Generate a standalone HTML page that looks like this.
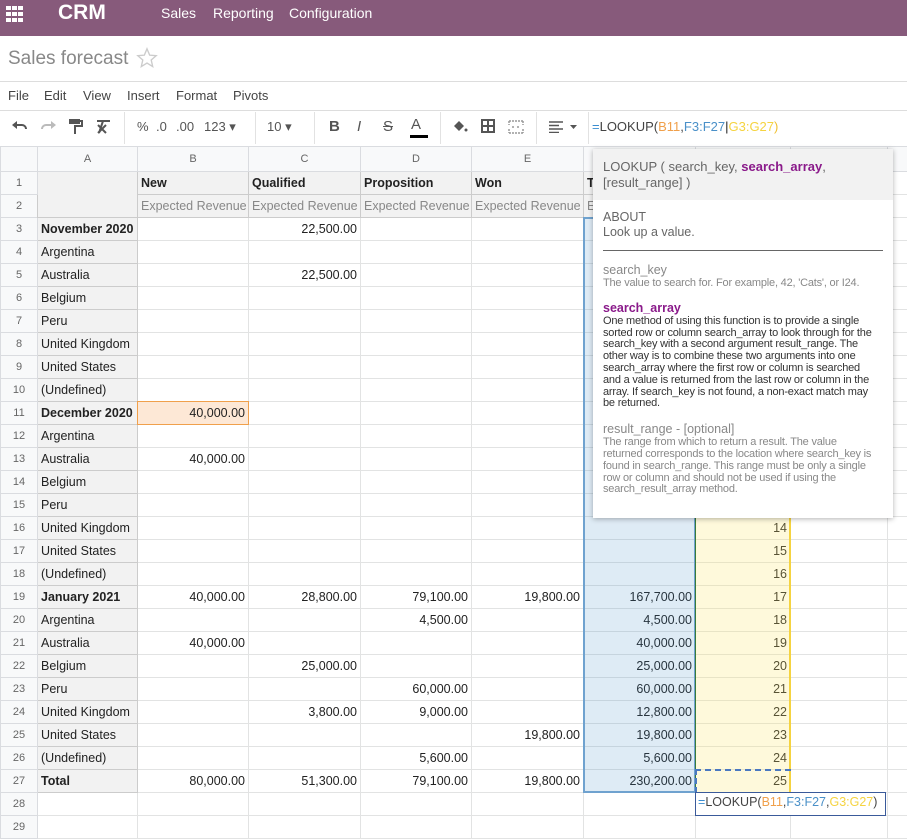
<!DOCTYPE html>
<html><head><meta charset="utf-8">
<style>
*{margin:0;padding:0;box-sizing:border-box}
body{width:907px;height:823px;overflow:hidden;background:#fff;font-family:"Liberation Sans",Arial,sans-serif;font-size:13px;color:#222;position:relative}
.top{position:absolute;left:0;top:0;width:907px;height:36px;background:#875a7b;color:#fff}
.top .logo{position:absolute;left:58px;top:1px;font-size:21px;font-weight:bold}
.top .m{position:absolute;top:5px;font-size:14px}
.title{position:absolute;left:8px;top:48px;font-size:19px;color:#888}
.line{position:absolute;left:0;width:907px;height:1px;background:#ddd}
.menu{position:absolute;top:88px;font-size:13px;color:#444}
.tb{position:absolute;top:119px;font-size:13px;color:#555}
.sep{position:absolute;top:112px;width:1px;height:32px;background:#e2e2e2}
table{position:absolute;left:0;top:146px;border-collapse:collapse;table-layout:fixed;width:907px}
td{height:23px;border:1px solid #e2e3e3;padding:0 3px;white-space:nowrap;overflow:hidden;font-size:12.5px;line-height:21px}
tr.ch td{height:25px;background:#f8f9fa;color:#666;text-align:center;font-size:11px;border-color:#dadce0}
td.r{background:#f8f9fa;color:#666;text-align:center;font-size:11px;border-color:#dadce0}
td.h{background:#f2f2f2;border-color:#ccc}
td.b{font-weight:bold}
td.n{text-align:right}
td.g{color:#888}
.ov{position:absolute}
.pop{position:absolute;left:593px;top:149px;width:300px;height:369px;background:#fff;box-shadow:0 1px 5px rgba(0,0,0,.3);color:#666}
.d{padding:1px 16px 0 10px;font-size:11px;line-height:11.8px;letter-spacing:-0.2px}
</style></head><body>
<div class="top">
<svg style="position:absolute;left:6px;top:6px" width="18" height="16" viewBox="0 0 18 16" fill="#fff"><rect x="0" y="0" width="5" height="4"/><rect x="6" y="0" width="5" height="4"/><rect x="12" y="0" width="5" height="4"/><rect x="0" y="6" width="5" height="4"/><rect x="6" y="6" width="5" height="4"/><rect x="12" y="6" width="5" height="4"/><rect x="0" y="12" width="5" height="4"/><rect x="6" y="12" width="5" height="4"/><rect x="12" y="12" width="5" height="4"/></svg>
<div class="logo">CRM</div>
<div class="m" style="left:161px">Sales</div>
<div class="m" style="left:213px">Reporting</div>
<div class="m" style="left:289px">Configuration</div>
</div>
<div class="title">Sales forecast</div>
<svg style="position:absolute;left:136px;top:47px" width="22" height="22" viewBox="0 0 24 24"><path d="M12 2l2.9 6.9 7.1.6-5.4 4.7 1.6 7.1L12 17.5 5.8 21.3l1.6-7.1L2 9.5l7.1-.6z" fill="none" stroke="#ccc" stroke-width="1.5"/></svg>
<div class="line" style="top:81px"></div>
<div class="menu" style="left:8px">File</div>
<div class="menu" style="left:44px">Edit</div>
<div class="menu" style="left:83px">View</div>
<div class="menu" style="left:127px">Insert</div>
<div class="menu" style="left:176px">Format</div>
<div class="menu" style="left:233px">Pivots</div>
<div class="line" style="top:110px"></div>
<svg style="position:absolute;left:11px;top:120px" width="18" height="14" viewBox="0 0 18 14"><path d="M3 5h8a4 4 0 0 1 4 4" fill="none" stroke="#555" stroke-width="2"/><path d="M1 5l5-4v8z" fill="#555"/></svg>
<svg style="position:absolute;left:39px;top:120px" width="18" height="14" viewBox="0 0 18 14"><path d="M15 5H7a4 4 0 0 0-4 4" fill="none" stroke="#bbb" stroke-width="2"/><path d="M17 5l-5-4v8z" fill="#bbb"/></svg>
<svg style="position:absolute;left:69px;top:119px" width="14" height="16" viewBox="0 0 14 16"><rect x="0" y="0" width="11" height="5" fill="#555"/><path d="M11 2h2v5H6v8" fill="none" stroke="#555" stroke-width="2"/></svg>
<svg style="position:absolute;left:96px;top:120px" width="16" height="14" viewBox="0 0 16 14"><path d="M1 1h13M7 1l-4 12M2 5l8 8M10 5l-8 8" fill="none" stroke="#555" stroke-width="2"/></svg>
<div class="sep" style="left:124px"></div>
<div class="tb" style="left:137px">%</div>
<div class="tb" style="left:156px">.0</div>
<div class="tb" style="left:176px">.00</div>
<div class="tb" style="left:204px">123 ▾</div>
<div class="sep" style="left:255px"></div>
<div class="tb" style="left:267px">10 ▾</div>
<div class="sep" style="left:314px"></div>
<div class="tb" style="left:329px;font-weight:bold;font-size:15px;top:118px">B</div>
<div class="tb" style="left:357px;font-style:italic;font-size:15px;top:118px">I</div>
<div class="tb" style="left:383px;font-size:15px;top:118px;text-decoration:line-through">S</div>
<div class="tb" style="left:411px;font-size:15px;top:116px">A</div>
<div class="ov" style="left:410px;top:135px;width:18px;height:3px;background:#000"></div>
<div class="sep" style="left:440px"></div>
<svg style="position:absolute;left:452px;top:119px" width="16" height="14" viewBox="0 0 16 14"><path d="M2 7l5-5 5 5-5 5z" fill="#555"/><circle cx="14" cy="11" r="1.5" fill="#555"/></svg>
<svg style="position:absolute;left:481px;top:119px" width="14" height="14" viewBox="0 0 14 14"><path d="M1 1h12v12H1zM7 1v12M1 7h12" fill="none" stroke="#555" stroke-width="2"/></svg>
<svg style="position:absolute;left:508px;top:120px" width="16" height="14" viewBox="0 0 16 14"><path d="M1 1h14M1 13h14M1 1v4M15 1v4M1 9v4M15 9v4M4 7h3M9 7h3" fill="none" stroke="#999" stroke-width="1.5" stroke-dasharray="2 1"/></svg>
<div class="sep" style="left:536px"></div>
<svg style="position:absolute;left:549px;top:121px" width="28" height="12" viewBox="0 0 28 12"><path d="M0 1h14M0 4.5h10M0 8h14M0 11.5h10" stroke="#555" stroke-width="1.6"/><path d="M21 4h7l-3.5 4z" fill="#555"/></svg>
<div class="sep" style="left:588px"></div>
<div class="tb" style="left:592px;color:#444"><span style="color:#3a8dd0">=</span>LOOKUP(<span style="color:#f0a04b">B11</span>,<span style="color:#4a90c8">F3:F27</span><span style="color:#222">|</span><span style="color:#f5d340">G3:G27</span><span style="color:#f0c030">)</span></div>

<table>
<colgroup><col style="width:37px"><col style="width:100px"><col style="width:111px"><col style="width:112px"><col style="width:111px"><col style="width:112px"><col style="width:112px"><col style="width:95px"><col style="width:97px"><col style="width:20px"></colgroup>
<tr class="ch"><td></td><td>A</td><td>B</td><td>C</td><td>D</td><td>E</td><td>F</td><td>G</td><td>H</td><td></td></tr>
<tr><td class="r">1</td><td class="h" rowspan="2"></td><td class="h b">New</td><td class="h b">Qualified</td><td class="h b">Proposition</td><td class="h b">Won</td><td class="h b">Total</td><td></td><td></td><td></td></tr>
<tr><td class="r">2</td><td class="h g">Expected Revenue</td><td class="h g">Expected Revenue</td><td class="h g">Expected Revenue</td><td class="h g">Expected Revenue</td><td class="h g">Expected Revenue</td><td></td><td></td><td></td></tr>
<tr><td class="r">3</td><td class="h b">November 2020</td><td></td><td class="n">22,500.00</td><td></td><td></td><td></td><td class="n">1</td><td></td><td></td></tr>
<tr><td class="r">4</td><td class="h">Argentina</td><td></td><td></td><td></td><td></td><td></td><td class="n">2</td><td></td><td></td></tr>
<tr><td class="r">5</td><td class="h">Australia</td><td></td><td class="n">22,500.00</td><td></td><td></td><td></td><td class="n">3</td><td></td><td></td></tr>
<tr><td class="r">6</td><td class="h">Belgium</td><td></td><td></td><td></td><td></td><td></td><td class="n">4</td><td></td><td></td></tr>
<tr><td class="r">7</td><td class="h">Peru</td><td></td><td></td><td></td><td></td><td></td><td class="n">5</td><td></td><td></td></tr>
<tr><td class="r">8</td><td class="h">United Kingdom</td><td></td><td></td><td></td><td></td><td></td><td class="n">6</td><td></td><td></td></tr>
<tr><td class="r">9</td><td class="h">United States</td><td></td><td></td><td></td><td></td><td></td><td class="n">7</td><td></td><td></td></tr>
<tr><td class="r">10</td><td class="h">(Undefined)</td><td></td><td></td><td></td><td></td><td></td><td class="n">8</td><td></td><td></td></tr>
<tr><td class="r">11</td><td class="h b">December 2020</td><td class="n" style="background:#fde8d6">40,000.00</td><td></td><td></td><td></td><td></td><td class="n">9</td><td></td><td></td></tr>
<tr><td class="r">12</td><td class="h">Argentina</td><td></td><td></td><td></td><td></td><td></td><td class="n">10</td><td></td><td></td></tr>
<tr><td class="r">13</td><td class="h">Australia</td><td class="n">40,000.00</td><td></td><td></td><td></td><td></td><td class="n">11</td><td></td><td></td></tr>
<tr><td class="r">14</td><td class="h">Belgium</td><td></td><td></td><td></td><td></td><td></td><td class="n">12</td><td></td><td></td></tr>
<tr><td class="r">15</td><td class="h">Peru</td><td></td><td></td><td></td><td></td><td></td><td class="n">13</td><td></td><td></td></tr>
<tr><td class="r">16</td><td class="h">United Kingdom</td><td></td><td></td><td></td><td></td><td></td><td class="n">14</td><td></td><td></td></tr>
<tr><td class="r">17</td><td class="h">United States</td><td></td><td></td><td></td><td></td><td></td><td class="n">15</td><td></td><td></td></tr>
<tr><td class="r">18</td><td class="h">(Undefined)</td><td></td><td></td><td></td><td></td><td></td><td class="n">16</td><td></td><td></td></tr>
<tr><td class="r">19</td><td class="h b">January 2021</td><td class="n">40,000.00</td><td class="n">28,800.00</td><td class="n">79,100.00</td><td class="n">19,800.00</td><td class="n">167,700.00</td><td class="n">17</td><td></td><td></td></tr>
<tr><td class="r">20</td><td class="h">Argentina</td><td></td><td></td><td class="n">4,500.00</td><td></td><td class="n">4,500.00</td><td class="n">18</td><td></td><td></td></tr>
<tr><td class="r">21</td><td class="h">Australia</td><td class="n">40,000.00</td><td></td><td></td><td></td><td class="n">40,000.00</td><td class="n">19</td><td></td><td></td></tr>
<tr><td class="r">22</td><td class="h">Belgium</td><td></td><td class="n">25,000.00</td><td></td><td></td><td class="n">25,000.00</td><td class="n">20</td><td></td><td></td></tr>
<tr><td class="r">23</td><td class="h">Peru</td><td></td><td></td><td class="n">60,000.00</td><td></td><td class="n">60,000.00</td><td class="n">21</td><td></td><td></td></tr>
<tr><td class="r">24</td><td class="h">United Kingdom</td><td></td><td class="n">3,800.00</td><td class="n">9,000.00</td><td></td><td class="n">12,800.00</td><td class="n">22</td><td></td><td></td></tr>
<tr><td class="r">25</td><td class="h">United States</td><td></td><td></td><td></td><td class="n">19,800.00</td><td class="n">19,800.00</td><td class="n">23</td><td></td><td></td></tr>
<tr><td class="r">26</td><td class="h">(Undefined)</td><td></td><td></td><td class="n">5,600.00</td><td></td><td class="n">5,600.00</td><td class="n">24</td><td></td><td></td></tr>
<tr><td class="r">27</td><td class="h b">Total</td><td class="n">80,000.00</td><td class="n">51,300.00</td><td class="n">79,100.00</td><td class="n">19,800.00</td><td class="n">230,200.00</td><td class="n">25</td><td></td><td></td></tr>
<tr><td class="r">28</td><td></td><td></td><td></td><td></td><td></td><td></td><td></td><td></td><td></td></tr>
<tr><td class="r">29</td><td></td><td></td><td></td><td></td><td></td><td></td><td></td><td></td><td></td></tr>
</table>
<div class="ov" style="left:137px;top:401px;width:112px;height:24px;border:1px solid #f0a04b;"></div>
<div class="ov" style="left:583px;top:217px;width:113px;height:576px;background:rgba(74,144,200,.18);border:2px solid #6fa2cf;"></div>
<div class="ov" style="left:695px;top:217px;width:96px;height:576px;background:rgba(250,230,110,.25);border-right:2px solid #f5d340;border-left:1px solid #3a7a3a;"></div>
<div class="ov" style="left:695px;top:769px;width:96px;height:24px;border:2px dashed #4a78c0;border-right:none;border-bottom:none"></div>
<div class="ov" style="left:695px;top:792px;width:191px;height:24px;background:#fff;border:1px solid #3a5a9a;padding:2px 2px;font-size:12.5px;color:#444"><span style="color:#3a8dd0">=</span>LOOKUP(<span style="color:#f0a04b">B11</span>,<span style="color:#4a90c8">F3:F27</span>,<span style="color:#f5d340">G3:G27</span>)</div>

<div class="pop">
<div style="background:#f2f2f2;padding:10px 10px 10px 10px;font-size:13px;line-height:16px;height:51px">LOOKUP ( search_key, <span style="color:#8a1a8a;font-weight:bold">search_array</span>,<br>[result_range] )</div>
<div style="padding:10px 10px 0 10px;font-size:12.5px;line-height:15px">ABOUT<br>Look up a value.</div>
<div style="margin:10px 10px 0 10px;height:1px;background:#666"></div>
<div style="padding:12px 10px 0 10px;font-size:12.5px;line-height:14px;color:#888">search_key</div>
<div class="d" style="color:#888">The value to search for. For example, 42, 'Cats', or I24.</div>
<div style="padding:11px 10px 0 10px;font-size:12.5px;line-height:14px;color:#8a1a8a;font-weight:bold">search_array</div>
<div class="d" style="color:#333">One method of using this function is to provide a single sorted row or column search_array to look through for the search_key with a second argument result_range. The other way is to combine these two arguments into one search_array where the first row or column is searched and a value is returned from the last row or column in the array. If search_key is not found, a non-exact match may be returned.</div>
<div style="padding:12px 10px 0 10px;font-size:12.5px;line-height:14px;color:#888">result_range - [optional]</div>
<div class="d" style="color:#888">The range from which to return a result. The value returned corresponds to the location where search_key is found in search_range. This range must be only a single row or column and should not be used if using the search_result_array method.</div>
</div>
</body></html>
